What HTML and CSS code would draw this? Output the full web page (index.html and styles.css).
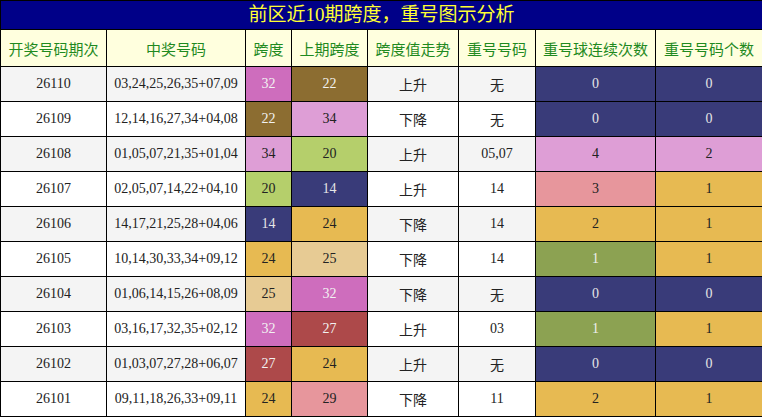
FILE: index.html
```html
<!DOCTYPE html>
<html lang="zh">
<head>
<meta charset="utf-8">
<link rel="stylesheet" href="styles.css">
</head>
<body>
<table class="chart">
  <colgroup>
    <col class="c1"><col class="c2"><col class="c3"><col class="c4">
    <col class="c5"><col class="c6"><col class="c7"><col class="c8">
  </colgroup>
  <thead>
    <tr class="title"><th colspan="8">前区近10期跨度，重号图示分析</th></tr>
    <tr class="head">
      <th>开奖号码期次</th><th>中奖号码</th><th>跨度</th><th>上期跨度</th>
      <th>跨度值走势</th><th>重号号码</th><th>重号球连续次数</th><th>重号号码个数</th>
    </tr>
  </thead>
  <tbody>
    <tr class="odd"><td>26110</td><td>03,24,25,26,35+07,09</td><td class="k-orchid">32</td><td class="k-brown">22</td><td class="cn">上升</td><td class="cn">无</td><td class="k-navy">0</td><td class="k-navy">0</td></tr>
    <tr><td>26109</td><td>12,14,16,27,34+04,08</td><td class="k-brown">22</td><td class="k-plum">34</td><td class="cn">下降</td><td class="cn">无</td><td class="k-navy">0</td><td class="k-navy">0</td></tr>
    <tr class="odd"><td>26108</td><td>01,05,07,21,35+01,04</td><td class="k-plum">34</td><td class="k-lime">20</td><td class="cn">上升</td><td>05,07</td><td class="k-plum">4</td><td class="k-plum">2</td></tr>
    <tr><td>26107</td><td>02,05,07,14,22+04,10</td><td class="k-lime">20</td><td class="k-navy">14</td><td class="cn">上升</td><td>14</td><td class="k-salmon">3</td><td class="k-gold">1</td></tr>
    <tr class="odd"><td>26106</td><td>14,17,21,25,28+04,06</td><td class="k-navy">14</td><td class="k-gold">24</td><td class="cn">下降</td><td>14</td><td class="k-gold">2</td><td class="k-gold">1</td></tr>
    <tr><td>26105</td><td>10,14,30,33,34+09,12</td><td class="k-gold">24</td><td class="k-tan">25</td><td class="cn">下降</td><td>14</td><td class="k-olive">1</td><td class="k-gold">1</td></tr>
    <tr class="odd"><td>26104</td><td>01,06,14,15,26+08,09</td><td class="k-tan">25</td><td class="k-orchid">32</td><td class="cn">下降</td><td class="cn">无</td><td class="k-navy">0</td><td class="k-navy">0</td></tr>
    <tr><td>26103</td><td>03,16,17,32,35+02,12</td><td class="k-orchid">32</td><td class="k-red">27</td><td class="cn">上升</td><td>03</td><td class="k-olive">1</td><td class="k-gold">1</td></tr>
    <tr class="odd"><td>26102</td><td>01,03,07,27,28+06,07</td><td class="k-red">27</td><td class="k-gold">24</td><td class="cn">上升</td><td class="cn">无</td><td class="k-navy">0</td><td class="k-navy">0</td></tr>
    <tr><td>26101</td><td>09,11,18,26,33+09,11</td><td class="k-gold">24</td><td class="k-salmon">29</td><td class="cn">下降</td><td>11</td><td class="k-gold">2</td><td class="k-gold">1</td></tr>
  </tbody>
</table>
</body>
</html>
```
FILE: styles.css
```css
html, body {
  margin: 0;
  padding: 0;
  background: #ffffff;
}

.chart {
  border-collapse: collapse;
  table-layout: fixed;
  width: 762px;
  font-family: "Liberation Serif", "Noto Sans CJK SC", serif;
  font-size: 14px;
  color: #222222;
}

.c1 { width: 106px; }
.c2 { width: 139px; }
.c3 { width: 46px; }
.c4 { width: 76px; }
.c5 { width: 91px; }
.c6 { width: 77px; }
.c7 { width: 120px; }
.c8 { width: 107px; }

.chart th,
.chart td {
  border: 1px solid #000000;
  padding: 0;
  text-align: center;
  vertical-align: middle;
  white-space: nowrap;
}

.title th {
  height: 28px;
  background: #000088;
  color: #ffff33;
  font-family: "Liberation Serif", "Noto Sans CJK SC", serif;
  font-size: 19px;
  font-weight: normal;
  line-height: 28px;
}

.head th {
  height: 36px;
  background: #ffffde;
  color: #1f8a1f;
  font-family: "Noto Sans CJK SC", sans-serif;
  font-size: 15px;
  font-weight: normal;
}

.chart td {
  height: 34px;
  background: #ffffff;
}

.chart tr.odd td {
  background: #f4f4f4;
}

.chart td.cn {
  font-family: "Noto Sans CJK SC", sans-serif;
  font-size: 14px;
}

.chart tr td.k-orchid { background: #ce6dbd; color: #f2f2f2; }
.chart tr td.k-brown  { background: #8c6d31; color: #f2f2f2; }
.chart tr td.k-plum   { background: #de9ed6; color: #222222; }
.chart tr td.k-lime   { background: #b5cf6b; color: #222222; }
.chart tr td.k-navy   { background: #393b79; color: #e6e6e6; }
.chart tr td.k-gold   { background: #e7ba52; color: #222222; }
.chart tr td.k-tan    { background: #e7cb94; color: #222222; }
.chart tr td.k-red    { background: #ad494a; color: #f2f2f2; }
.chart tr td.k-salmon { background: #e7969c; color: #222222; }
.chart tr td.k-olive  { background: #8ca252; color: #eeeeee; }
```
